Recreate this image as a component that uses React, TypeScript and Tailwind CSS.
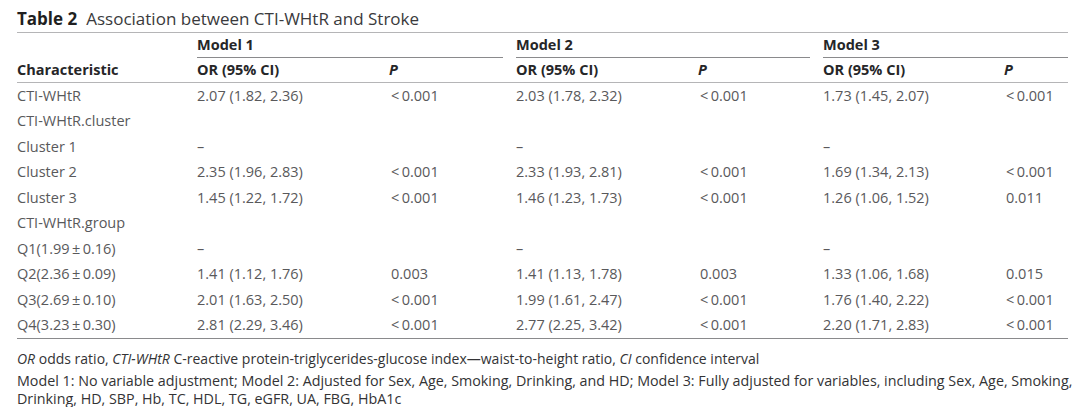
import React from 'react';

type Row = {
  label: string;
  m1?: [string, string];
  m2?: [string, string];
  m3?: [string, string];
};

const LT = '<\u20090.001';
const DASH = '–';

const rows: Row[] = [
  { label: 'CTI-WHtR', m1: ['2.07 (1.82, 2.36)', LT], m2: ['2.03 (1.78, 2.32)', LT], m3: ['1.73 (1.45, 2.07)', LT] },
  { label: 'CTI-WHtR.cluster' },
  { label: 'Cluster 1', m1: [DASH, ''], m2: [DASH, ''], m3: [DASH, ''] },
  { label: 'Cluster 2', m1: ['2.35 (1.96, 2.83)', LT], m2: ['2.33 (1.93, 2.81)', LT], m3: ['1.69 (1.34, 2.13)', LT] },
  { label: 'Cluster 3', m1: ['1.45 (1.22, 1.72)', LT], m2: ['1.46 (1.23, 1.73)', LT], m3: ['1.26 (1.06, 1.52)', '0.011'] },
  { label: 'CTI-WHtR.group' },
  { label: 'Q1(1.99\u2009±\u20090.16)', m1: [DASH, ''], m2: [DASH, ''], m3: [DASH, ''] },
  { label: 'Q2(2.36\u2009±\u20090.09)', m1: ['1.41 (1.12, 1.76)', '0.003'], m2: ['1.41 (1.13, 1.78)', '0.003'], m3: ['1.33 (1.06, 1.68)', '0.015'] },
  { label: 'Q3(2.69\u2009±\u20090.10)', m1: ['2.01 (1.63, 2.50)', LT], m2: ['1.99 (1.61, 2.47)', LT], m3: ['1.76 (1.40, 2.22)', LT] },
  { label: 'Q4(3.23\u2009±\u20090.30)', m1: ['2.81 (2.29, 3.46)', LT], m2: ['2.77 (2.25, 3.42)', LT], m3: ['2.20 (1.71, 2.83)', LT] },
];

const cols = 'grid grid-cols-[180px_191px_128px_181px_126px_180px_65px]';

export default function App() {
  return (
    <div className="w-[1080px] h-[407px] bg-white pl-[17px] pt-[5px] text-[14.5px] text-[#59595b] overflow-hidden" style={{ fontFamily: '"Open Sans", "Noto Sans", sans-serif' }}>
      <div className="h-[27px] flex items-center text-[17px] text-[#3a3a3c]">
        <span className="font-bold text-[#1f1f21] mr-[9px]">Table 2</span>
        <span>Association between CTI-WHtR and Stroke</span>
      </div>

      <div className="w-[1051px] border-t border-[#b5b5b7]">
        <div className={`${cols} h-[25px] font-bold text-[#262628]`}>
          <div />
          <div className="col-span-2 pr-[13px]">
            <div className="h-full flex items-center border-b border-[#8a8a8c]">Model 1</div>
          </div>
          <div className="col-span-2 pr-[13px]">
            <div className="h-full flex items-center border-b border-[#8a8a8c]">Model 2</div>
          </div>
          <div className="col-span-2">
            <div className="h-full flex items-center border-b border-[#8a8a8c]">Model 3</div>
          </div>
        </div>

        <div className={`${cols} h-[25px] items-center font-bold text-[#262628] border-b border-[#b5b5b7]`}>
          <div>Characteristic</div>
          <div>OR (95% CI)</div>
          <div className="italic pl-[1px]">P</div>
          <div>OR (95% CI)</div>
          <div className="italic pl-[1px]">P</div>
          <div>OR (95% CI)</div>
          <div className="italic pl-[1px]">P</div>
        </div>

        <div className="border-b border-[#8a8a8c]">
          {rows.map((r) => (
            <div key={r.label} className={`${cols} h-[25.5px] items-center`}>
              <div>{r.label}</div>
              <div>{r.m1?.[0]}</div>
              <div className="pl-[3px]">{r.m1?.[1]}</div>
              <div>{r.m2?.[0]}</div>
              <div className="pl-[3px]">{r.m2?.[1]}</div>
              <div>{r.m3?.[0]}</div>
              <div className="pl-[3px]">{r.m3?.[1]}</div>
            </div>
          ))}
        </div>
      </div>

      <div className="mt-[11px] text-[14px] text-[#333335] leading-[18px]">
        <i>OR</i> odds ratio, <i>CTI-WHtR</i> C-reactive protein-triglycerides-glucose index—waist-to-height ratio, <i>CI</i> confidence interval
      </div>
      <div className="mt-[4px] w-[1062px] text-[14.3px] text-[#333335] leading-[18px]">
        Model 1: No variable adjustment; Model 2: Adjusted for Sex, Age, Smoking, Drinking, and HD; Model 3: Fully adjusted for variables, including Sex, Age, Smoking, Drinking, HD, SBP, Hb, TC, HDL, TG, eGFR, UA, FBG, HbA1c
      </div>
    </div>
  );
}
